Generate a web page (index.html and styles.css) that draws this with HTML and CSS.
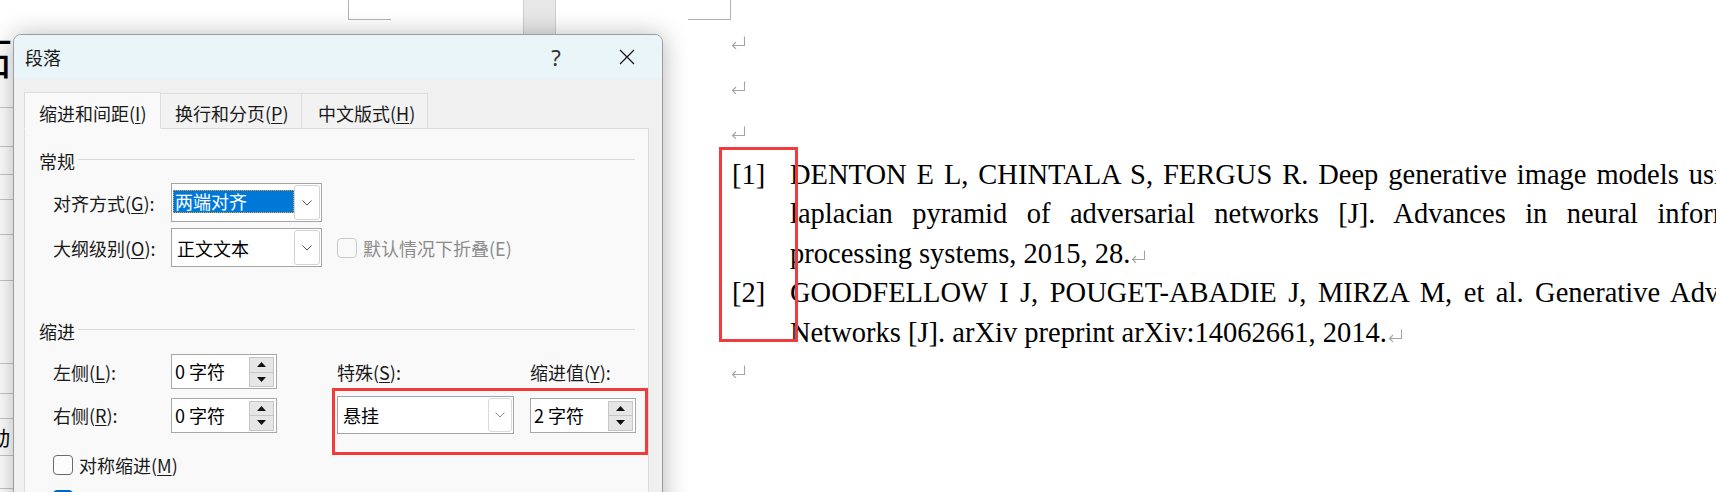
FILE: index.html
```html
<!DOCTYPE html>
<html lang="zh-CN">
<head>
<meta charset="utf-8">
<title>段落</title>
<link rel="stylesheet" href="styles.css">
</head>
<body>
<div class="screen">
  <div class="left-strip">
    <span class="big-char">石</span>
    <span class="small-char">动</span>
  </div>
  <div class="middle">
    <div class="crop crop-l"></div>
    <div class="vbar"></div>
    <div class="crop crop-r"></div>
  </div>
  <div class="doc">
    <p class="empty"><svg class="pm" width="15" height="13" viewBox="0 0 15 13"><path d="M13.5 0.5 V9.5 H1.5 M5 6 L1.5 9.5 L5 13" fill="none" stroke="#a3a3a3" stroke-width="1.1"/></svg></p>
    <p class="empty"><svg class="pm" width="15" height="13" viewBox="0 0 15 13"><path d="M13.5 0.5 V9.5 H1.5 M5 6 L1.5 9.5 L5 13" fill="none" stroke="#a3a3a3" stroke-width="1.1"/></svg></p>
    <p class="empty"><svg class="pm" width="15" height="13" viewBox="0 0 15 13"><path d="M13.5 0.5 V9.5 H1.5 M5 6 L1.5 9.5 L5 13" fill="none" stroke="#a3a3a3" stroke-width="1.1"/></svg></p>
    <div class="ref">
      <div class="line"><span class="num">[1]</span><span class="jl w1">DENTON E L, CHINTALA S, FERGUS R. Deep generative image models using a</span></div>
      <div class="line cont"><span class="jl w2">laplacian pyramid of adversarial networks [J]. Advances in neural information</span></div>
      <div class="line cont">processing systems, 2015, 28.<svg class="pm inl" width="15" height="13" viewBox="0 0 15 13"><path d="M13.5 0.5 V9.5 H1.5 M5 6 L1.5 9.5 L5 13" fill="none" stroke="#a3a3a3" stroke-width="1.1"/></svg></div>
    </div>
    <div class="ref">
      <div class="line"><span class="num">[2]</span><span class="jl w4">GOODFELLOW I J, POUGET-ABADIE J, MIRZA M, et al. Generative Adversarial</span></div>
      <div class="line cont">Networks [J]. arXiv preprint arXiv:14062661, 2014.<svg class="pm inl" width="15" height="13" viewBox="0 0 15 13"><path d="M13.5 0.5 V9.5 H1.5 M5 6 L1.5 9.5 L5 13" fill="none" stroke="#a3a3a3" stroke-width="1.1"/></svg></div>
    </div>
    <p class="tail"><svg class="pm" width="15" height="13" viewBox="0 0 15 13"><path d="M13.5 0.5 V9.5 H1.5 M5 6 L1.5 9.5 L5 13" fill="none" stroke="#a3a3a3" stroke-width="1.1"/></svg></p>
  </div>

  <div class="redbox red-doc"></div>

  <div class="dialog">
    <div class="titlebar">
      <span class="title">段落</span>
      <span class="help">?</span>
      <span class="close"><svg width="16" height="16" viewBox="0 0 16 16"><path d="M1 1 L15 15 M15 1 L1 15" stroke="#1a1a1a" stroke-width="1.3" fill="none"/></svg></span>
    </div>
    <div class="dbody">
      <div class="tabs">
        <div class="tab active">缩进和间距(<u>I</u>)</div>
        <div class="tab t2">换行和分页(<u>P</u>)</div>
        <div class="tab t3">中文版式(<u>H</u>)</div>
      </div>
      <div class="panel">
        <div class="ghead"><span>常规</span><i class="rule"></i></div>
        <div class="frow first">
          <span class="lbl">对齐方式(<u>G</u>):</span>
          <div class="combo"><span class="sel">两端对齐</span><span class="dd"><svg width="10" height="6" viewBox="0 0 10 6"><polyline points="0.5,0.5 5,5 9.5,0.5" fill="none" stroke="#555" stroke-width="1"/></svg></span></div>
        </div>
        <div class="frow second">
          <span class="lbl">大纲级别(<u>O</u>):</span>
          <div class="combo"><span class="val">正文文本</span><span class="dd"><svg width="10" height="6" viewBox="0 0 10 6"><polyline points="0.5,0.5 5,5 9.5,0.5" fill="none" stroke="#555" stroke-width="1"/></svg></span></div>
          <span class="chk dis"></span><span class="dis-text">默认情况下折叠(E)</span>
        </div>
        <div class="ghead g2"><span>缩进</span><i class="rule"></i></div>
        <div class="igrid">
          <span class="lbl">左侧(<u>L</u>):</span>
          <div class="spin"><span class="v">0 字符</span><span class="btns"><span class="sb"><svg width="9" height="5" viewBox="0 0 9 5"><polygon points="0,5 4.5,0 9,5" fill="#111"/></svg></span><span class="sb"><svg width="9" height="5" viewBox="0 0 9 5"><polygon points="0,0 4.5,5 9,0" fill="#111"/></svg></span></span></div>
          <span class="lbl">特殊(<u>S</u>):</span>
          <span class="lbl">缩进值(<u>Y</u>):</span>
          <span class="lbl">右侧(<u>R</u>):</span>
          <div class="spin"><span class="v">0 字符</span><span class="btns"><span class="sb"><svg width="9" height="5" viewBox="0 0 9 5"><polygon points="0,5 4.5,0 9,5" fill="#111"/></svg></span><span class="sb"><svg width="9" height="5" viewBox="0 0 9 5"><polygon points="0,0 4.5,5 9,0" fill="#111"/></svg></span></span></div>
          <div class="combo wide"><span class="val">悬挂</span><span class="dd light"><svg width="10" height="6" viewBox="0 0 10 6"><polyline points="0.5,0.5 5,5 9.5,0.5" fill="none" stroke="#8a8a8a" stroke-width="1"/></svg></span></div>
          <div class="spin"><span class="v">2 字符</span><span class="btns"><span class="sb"><svg width="9" height="5" viewBox="0 0 9 5"><polygon points="0,5 4.5,0 9,5" fill="#111"/></svg></span><span class="sb"><svg width="9" height="5" viewBox="0 0 9 5"><polygon points="0,0 4.5,5 9,0" fill="#111"/></svg></span></span></div>
        </div>
        <div class="crow"><span class="chk"></span><span class="ctext">对称缩进(<u>M</u>)</span></div>
        <div class="crow c2"><span class="chk on"></span></div>
      </div>
    </div>
  </div>

  <div class="redbox red-dlg"></div>
</div>
</body>
</html>
```

FILE: styles.css
```css
* { box-sizing: border-box; }
html, body { margin: 0; padding: 0; background: #fff; overflow: hidden; }
body { width: 1716px; height: 492px; }

.screen {
  position: relative;
  display: flex;
  align-items: flex-start;
  width: 1716px;
  height: 492px;
  overflow: hidden;
  background: #fff;
}

/* page content peeking at the far left, behind the dialog */
.left-strip {
  flex: none;
  width: 13px;
  height: 492px;
  overflow: hidden;
  display: flex;
  flex-direction: column;
  font-family: "Noto Sans CJK SC", sans-serif;
  color: #000;
  background:
    linear-gradient(#c9c9c9, #c9c9c9) 0 107px / 100% 1px no-repeat,
    linear-gradient(#c9c9c9, #c9c9c9) 0 146px / 100% 1px no-repeat,
    linear-gradient(#c9c9c9, #c9c9c9) 0 174px / 100% 1px no-repeat,
    linear-gradient(#c9c9c9, #c9c9c9) 0 199px / 100% 1px no-repeat,
    linear-gradient(#c9c9c9, #c9c9c9) 0 234px / 100% 1px no-repeat,
    linear-gradient(#c9c9c9, #c9c9c9) 0 280px / 100% 1px no-repeat,
    linear-gradient(#c9c9c9, #c9c9c9) 0 363px / 100% 1px no-repeat,
    linear-gradient(#c9c9c9, #c9c9c9) 0 393px / 100% 1px no-repeat,
    linear-gradient(#c9c9c9, #c9c9c9) 0 418px / 100% 1px no-repeat,
    linear-gradient(#c9c9c9, #c9c9c9) 0 455px / 100% 1px no-repeat,
    linear-gradient(#c9c9c9, #c9c9c9) 0 488px / 100% 1px no-repeat,
    #fff;
}
.big-char {
  display: block;
  font-size: 44px;
  line-height: 44px;
  margin-top: 34px;
  margin-left: -31px;
  white-space: nowrap;
}
.small-char {
  display: block;
  font-size: 20px;
  line-height: 20px;
  margin-top: 350px;
  margin-left: -10px;
  white-space: nowrap;
}

/* page top decorations */
.middle {
  flex: none;
  width: 718px;
  display: flex;
  align-items: flex-start;
}
.crop { width: 43px; height: 20px; border-bottom: 1px solid #b3b3b3; }
.crop-l { margin-left: 335px; border-left: 1px solid #b3b3b3; }
.crop-r { margin-left: 132px; border-right: 1px solid #b3b3b3; }
.vbar {
  margin-left: 132px;
  width: 33px;
  height: 36px;
  background: #e7e7e7;
  border-left: 1px solid #cfcfcf;
  border-right: 1px solid #cfcfcf;
}

/* document text */
.doc {
  flex: none;
  width: 1100px;
  padding-top: 20px;
  font-family: "Liberation Serif", "Times New Roman", serif;
  font-size: 28.5px;
  color: #000;
}
.empty, .tail {
  margin: 0;
  height: 45px;
  display: flex;
  align-items: center;
}
.tail { height: 39px; }
.pm { display: block; flex: none; }
.pm.inl { display: inline-block; margin-left: 1px; vertical-align: -1px; }
.ref { padding-left: 1px; }
.line {
  display: flex;
  align-items: baseline;
  height: 39.4px;
  line-height: 39.4px;
  white-space: nowrap;
}
.line.cont { padding-left: 58px; }
.num { flex: none; width: 58px; }
.jl {
  flex: none;
  width: 1002px;
  white-space: normal;
  text-align: justify;
  text-align-last: justify;
}
.jl.w1 { width: 983px; }
.jl.w2 { width: 1002px; }
.jl.w4 { width: 1013px; }

/* red annotation boxes */
.redbox {
  position: absolute;
  border: 3px solid #f23b3b;
  pointer-events: none;
}
.red-doc { left: 719px; top: 147px; width: 79px; height: 195px; }
.red-dlg { left: 332px; top: 388px; width: 316px; height: 67px; }

/* dialog window */
.dialog {
  position: absolute;
  left: 13px;
  top: 34px;
  width: 650px;
  height: 480px;
  border: 1px solid #9d9d9d;
  border-radius: 8px 8px 0 0;
  background: #f0f0f0;
  box-shadow: 0 2px 26px rgba(0, 0, 0, 0.30);
  font-family: "Noto Sans CJK SC", "Microsoft YaHei", sans-serif;
  font-size: 18px;
  color: #1a1a1a;
  overflow: hidden;
}
.titlebar {
  height: 44px;
  display: flex;
  align-items: center;
  padding-left: 11px;
  background: #e9f5f8;
}
.title { flex: 1; line-height: 24px; }
.help {
  width: 46px;
  text-align: center;
  font-family: "Noto Sans", sans-serif;
  font-size: 22px;
  color: #333;
  margin-right: 25px;
  line-height: 24px;
}
.close {
  width: 46px;
  height: 44px;
  display: flex;
  align-items: center;
  justify-content: center;
  margin-right: 12px;
}

.dbody { padding: 13px 13px 0 10px; }
.tabs { display: flex; align-items: flex-end; height: 37px; position: relative; z-index: 1; }
.tab {
  height: 36px;
  padding-left: 14px;
  line-height: 38px;
  background: #f2f2f2;
  border: 1px solid #dedede;
  border-left: none;
  border-bottom: 1px solid #dcdcdc;
  white-space: nowrap;
}
.tab.active {
  width: 137px;
  height: 37px;
  background: #f9f9f9;
  border-left: 1px solid #dcdcdc;
  border-bottom-color: #f9f9f9;
  line-height: 40px;
}
.tab.t2 { width: 141px; }
.tab.t3 { width: 126px; padding-left: 16px; }
u { text-decoration: underline; text-underline-offset: 2px; text-decoration-thickness: 1px; }

.panel {
  margin-top: -1px;
  height: 420px;
  background: #f9f9f9;
  border: 1px solid #dcdcdc;
  padding: 20px 13px 0 14px;
}
.ghead { display: flex; align-items: center; height: 24px; line-height: 24px; }
.ghead .rule { flex: 1; height: 1px; background: #d9d9d9; margin-left: 3px; margin-top: -3px; }
.ghead.g2 { margin-top: 52px; }

.frow { display: flex; align-items: center; padding-left: 14px; }
.frow.first { margin-top: 10px; }
.frow.second { margin-top: 6px; }
.lbl { width: 118px; flex: none; line-height: 24px; white-space: nowrap; }

.combo {
  flex: none;
  display: flex;
  align-items: center;
  width: 151px;
  height: 39px;
  border: 1px solid #a4a4a4;
  background: #fff;
  padding: 1px;
}
.combo .sel {
  flex: 1;
  height: 23px;
  margin-top: -2px;
  background: #0078d7;
  color: #fff;
  border: 1px dotted #f0a23a;
  line-height: 21px;
  padding-left: 1px;
  overflow: hidden;
  white-space: nowrap;
}
.combo .val { flex: 1; padding-left: 4px; line-height: 24px; white-space: nowrap; color: #000; }
.dd {
  flex: none;
  width: 26px;
  height: 35px;
  border: 1px solid #d3d3d3;
  border-radius: 3px;
  background: #fff;
  display: flex;
  align-items: center;
  justify-content: center;
}
.combo.wide { width: 177px; height: 38px; }
.combo.wide .dd { width: 24px; height: 34px; border-color: #dadada; }

.chk {
  flex: none;
  width: 20px;
  height: 20px;
  border: 1px solid #6b6b6b;
  border-radius: 4px;
  background: #fdfdfd;
}
.chk.dis { margin-left: 15px; border-color: #cacaca; background: #f9f9f9; }
.chk.on { background: #0067c0; border-color: #0067c0; }
.dis-text { margin-left: 6px; color: #8c8c8c; line-height: 24px; white-space: nowrap; }

.igrid {
  margin-top: 11px;
  margin-left: 14px;
  display: grid;
  grid-template-columns: 118px 166px 193px 120px;
  grid-template-rows: 35px 38px;
  row-gap: 7px;
  align-items: center;
}
.spin {
  display: flex;
  width: 106px;
  height: 35px;
  border: 1px solid #a8a8a8;
  background: #fff;
  padding: 2px 2px 1px 2px;
}
.spin .v { flex: 1; padding-left: 1px; line-height: 28px; white-space: nowrap; color: #000; }
.spin .btns { flex: none; width: 25px; display: flex; flex-direction: column; }
.spin .sb {
  flex: 1;
  display: flex;
  align-items: center;
  justify-content: center;
  background: #e6e6e6;
  border: 1px solid #c6c6c6;
}
.spin .sb + .sb { border-top: none; }

.crow { display: flex; align-items: center; height: 24px; padding-left: 14px; margin-top: 19px; }
.crow .ctext { margin-left: 6px; line-height: 24px; white-space: nowrap; }
.crow.c2 { margin-top: 11px; }
```
